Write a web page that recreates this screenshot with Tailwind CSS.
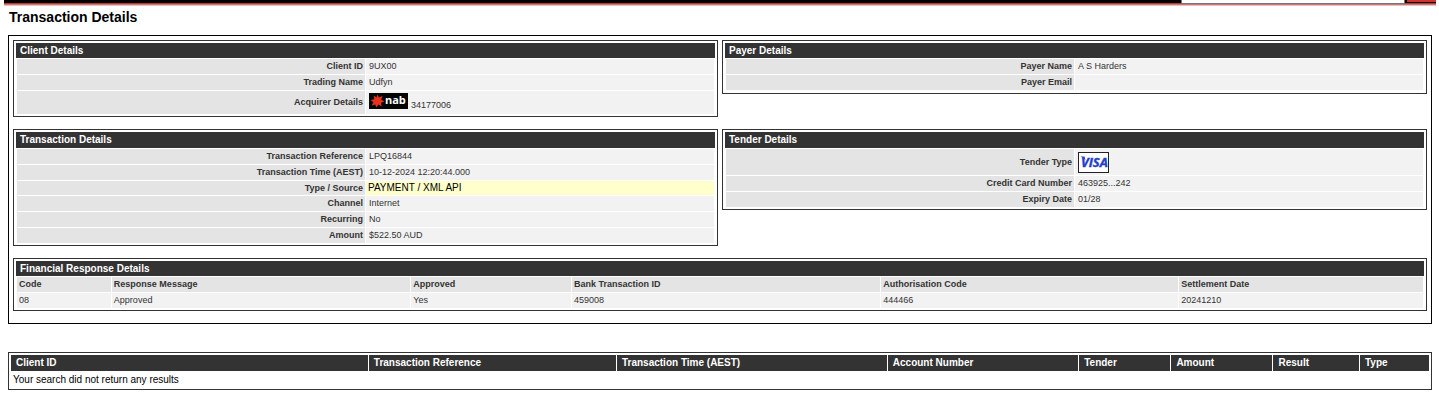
<!DOCTYPE html>
<html lang="en">
<head>
    <meta charset="UTF-8">
    <meta name="viewport" content="width=device-width, initial-scale=1.0">
    <title>Transaction Details</title>
    <script src="https://cdn.jsdelivr.net/npm/@tailwindcss/browser@4"></script>
</head>
<body class="bg-white font-['Liberation_Sans',Arial,sans-serif] text-[10px] leading-[15px] text-black">
    <!-- Top bar -->
    <header class="ml-1 mr-[3px] border-b border-[#d8c8c8]">
        <div class="border-b border-[#d9706c]">
            <div class="flex h-1 items-start justify-end border-b border-[#c0392b] bg-black">
                <input type="text" aria-label="Search" class="h-1 w-[224px] border-x border-b border-[#767676] bg-white">
                <button type="button" aria-label="Go" class="ml-[2px] h-[2px] w-[29px] bg-[#cc3333]"></button>
            </div>
        </div>
    </header>

    <main class="px-2 pr-[7px]">
        <h1 class="pt-[3px] pb-[10px] pl-px text-[14px] leading-4 font-bold">Transaction Details</h1>

        <div class="border border-black p-1 pb-3">
            <div class="grid grid-cols-2 items-start gap-x-1 gap-y-3">
                <!-- Client -->
                <section class="border border-[#333] p-[2px] pb-px">
                    <h2 class="bg-[#333] pl-1 font-bold text-white">Client Details</h2>
                    <table class="w-full table-fixed border-separate border-spacing-px text-[9px] text-[#333]">
                        <tr>
                            <th scope="row" class="w-1/2 bg-[#e4e4e4] pr-[2px] text-right">Client ID</th>
                            <td class="bg-[#f2f2f2] pl-[3px]">9UX00</td>
                        </tr>
                        <tr>
                            <th scope="row" class="bg-[#e4e4e4] pr-[2px] text-right">Trading Name</th>
                            <td class="bg-[#f2f2f2] pl-[3px]">Udfyn</td>
                        </tr>
                        <tr>
                            <th scope="row" class="h-[23px] bg-[#e4e4e4] pr-[2px] text-right">Acquirer Details</th>
                            <td class="bg-[#f2f2f2] pl-[3px]">
                                <div class="flex h-[21px] items-end gap-[3px]">
                                    <svg class="mb-1 h-4 w-[39px]" viewBox="0 0 39 16" role="img" aria-label="nab">
                                        <rect width="39" height="16" fill="#050505"/>
                                        <path d="M8.6 1.4 9.9 4.6 13.6 3 12.2 6.6 15.2 8.4 12 9.8 12.6 13.6 9.4 11.6 7.4 14.6 6.2 11.4 2.6 12.6 4.4 9.2 1.6 7 5.2 6.2 4.6 2.6 7.4 4.6Z" fill="#e8301c"/>
                                        <text x="16" y="11" fill="#fff" font-family="Open Sans" font-weight="700" font-size="11">nab</text>
                                    </svg>
                                    <span>34177006</span>
                                </div>
                            </td>
                        </tr>
                    </table>
                </section>

                <!-- Payer -->
                <section class="border border-[#333] p-[2px]">
                    <h2 class="bg-[#333] pl-1 font-bold text-white">Payer Details</h2>
                    <table class="w-full table-fixed border-separate border-spacing-px text-[9px] text-[#333]">
                        <tr>
                            <th scope="row" class="w-1/2 bg-[#e4e4e4] pr-[2px] text-right">Payer Name</th>
                            <td class="bg-[#f2f2f2] pl-[3px]">A S Harders</td>
                        </tr>
                        <tr>
                            <th scope="row" class="bg-[#e4e4e4] pr-[2px] text-right">Payer Email</th>
                            <td class="bg-[#f2f2f2] pl-[3px]"></td>
                        </tr>
                    </table>
                </section>

                <!-- Transaction -->
                <section class="border border-[#333] p-[2px] pb-px">
                    <h2 class="bg-[#333] pl-1 leading-4 font-bold text-white">Transaction Details</h2>
                    <table class="w-full table-fixed border-separate border-spacing-px text-[9px] text-[#333]">
                        <tr>
                            <th scope="row" class="w-1/2 bg-[#e4e4e4] pr-[2px] text-right">Transaction Reference</th>
                            <td class="bg-[#f2f2f2] pl-[3px]">LPQ16844</td>
                        </tr>
                        <tr>
                            <th scope="row" class="bg-[#e4e4e4] pr-[2px] text-right">Transaction Time (AEST)</th>
                            <td class="bg-[#f2f2f2] pl-[3px]">10-12-2024 12:20:44.000</td>
                        </tr>
                        <tr class="leading-[14px]">
                            <th scope="row" class="bg-[#e4e4e4] pr-[2px] text-right">Type / Source</th>
                            <td class="bg-[#ffc] pl-[2px] text-[10px] text-black">PAYMENT / XML API</td>
                        </tr>
                        <tr>
                            <th scope="row" class="bg-[#e4e4e4] pr-[2px] text-right">Channel</th>
                            <td class="bg-[#f2f2f2] pl-[3px]">Internet</td>
                        </tr>
                        <tr>
                            <th scope="row" class="bg-[#e4e4e4] pr-[2px] text-right">Recurring</th>
                            <td class="bg-[#f2f2f2] pl-[3px]">No</td>
                        </tr>
                        <tr>
                            <th scope="row" class="bg-[#e4e4e4] pr-[2px] text-right">Amount</th>
                            <td class="bg-[#f2f2f2] pl-[3px]">$522.50 AUD</td>
                        </tr>
                    </table>
                </section>

                <!-- Tender -->
                <section class="border border-[#333] p-[2px] pb-px">
                    <h2 class="bg-[#333] pl-1 leading-4 font-bold text-white">Tender Details</h2>
                    <table class="w-full table-fixed border-separate border-spacing-px text-[9px] text-[#333]">
                        <tr>
                            <th scope="row" class="h-[26px] w-1/2 bg-[#e4e4e4] pr-[2px] text-right">Tender Type</th>
                            <td class="bg-[#f2f2f2] pl-[3px]">
                                <svg class="h-[21px] w-[31px]" viewBox="0 0 31 21" role="img" aria-label="Visa">
                                    <rect x=".5" y=".5" width="30" height="20" fill="#fff" stroke="#222"/>
                                    <path d="M2.5 4.5H6.5L7.5 8Z" fill="#2340c8"/>
                                    <text x="3" y="15" fill="#2340c8" stroke="#2340c8" stroke-width=".4" font-family="Liberation Sans Narrow, Open Sans" font-weight="700" font-style="italic" font-size="13">VISA</text>
                                </svg>
                            </td>
                        </tr>
                        <tr>
                            <th scope="row" class="bg-[#e4e4e4] pr-[2px] text-right">Credit Card Number</th>
                            <td class="bg-[#f2f2f2] pl-[3px]">463925...242</td>
                        </tr>
                        <tr>
                            <th scope="row" class="bg-[#e4e4e4] pr-[2px] text-right">Expiry Date</th>
                            <td class="bg-[#f2f2f2] pl-[3px]">01/28</td>
                        </tr>
                    </table>
                </section>

                <!-- Financial response -->
                <section class="col-span-2 border border-[#333] p-[2px] pb-px">
                    <h2 class="bg-[#333] pl-1 font-bold text-white">Financial Response Details</h2>
                    <table class="w-full table-fixed border-separate border-spacing-px text-left text-[9px] text-[#333]">
                        <tr class="bg-[#e4e4e4]">
                            <th scope="col" class="w-[6.7%] pl-[2px]">Code</th>
                            <th scope="col" class="w-[21.3%] pl-[2px]">Response Message</th>
                            <th scope="col" class="w-[11.4%] pl-[2px]">Approved</th>
                            <th scope="col" class="w-[22%] pl-[2px]">Bank Transaction ID</th>
                            <th scope="col" class="w-[21.2%] pl-[2px]">Authorisation Code</th>
                            <th scope="col" class="pl-[2px]">Settlement Date</th>
                        </tr>
                        <tr class="bg-[#f2f2f2]">
                            <td class="pl-[2px]">08</td>
                            <td class="pl-[2px]">Approved</td>
                            <td class="pl-[2px]">Yes</td>
                            <td class="pl-[2px]">459008</td>
                            <td class="pl-[2px]">444466</td>
                            <td class="pl-[2px]">20241210</td>
                        </tr>
                    </table>
                </section>
            </div>
        </div>

        <!-- Search results -->
        <div class="mt-7 border border-[#333] p-[2px] pb-px">
            <table class="w-full table-fixed text-left">
                <tr class="bg-[#333] leading-4 text-white">
                    <th scope="col" class="w-[25.2%] pl-[5px]">Client ID</th>
                    <th scope="col" class="w-[17.5%] border-l border-white pl-[5px]">Transaction Reference</th>
                    <th scope="col" class="w-[19.1%] border-l border-white pl-[5px]">Transaction Time (AEST)</th>
                    <th scope="col" class="w-[13.5%] border-l border-white pl-[5px]">Account Number</th>
                    <th scope="col" class="w-[6.5%] border-l border-white pl-[5px]">Tender</th>
                    <th scope="col" class="w-[7.2%] border-l border-white pl-[5px]">Amount</th>
                    <th scope="col" class="w-[6.1%] border-l border-white pl-[5px]">Result</th>
                    <th scope="col" class="border-l border-white pl-[5px]">Type</th>
                </tr>
                <tr>
                    <td colspan="8" class="pt-px pl-[2px] leading-4">Your search did not return any results</td>
                </tr>
            </table>
        </div>
    </main>
</body>
</html>
